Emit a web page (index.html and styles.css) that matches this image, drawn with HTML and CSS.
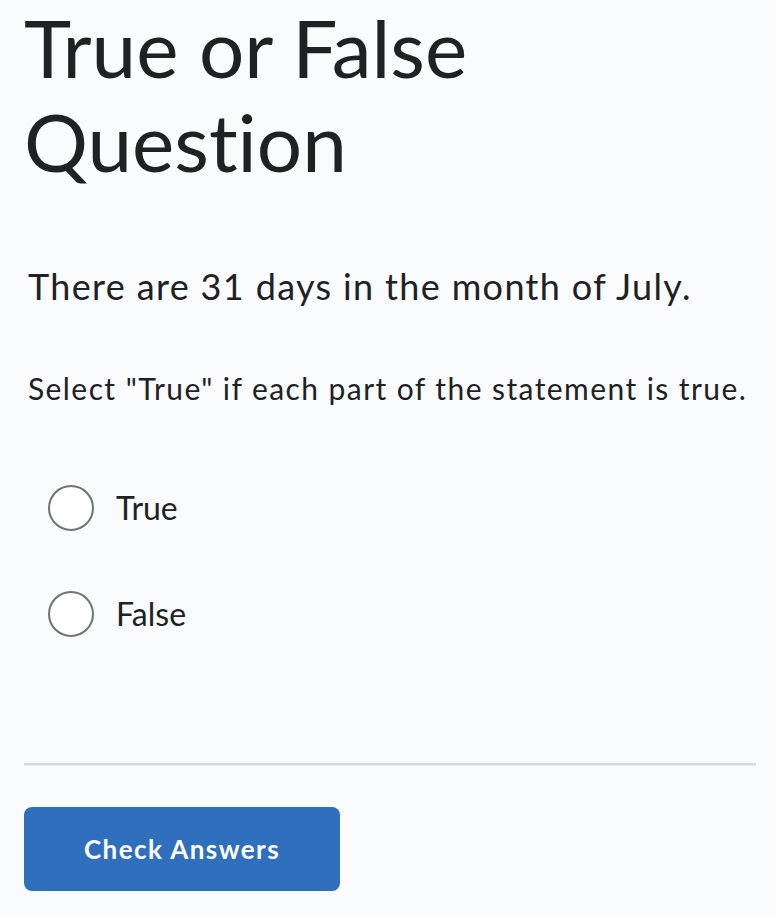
FILE: index.html
```html
<!DOCTYPE html>
<html lang="en">
<head>
<meta charset="utf-8">
<title>True or False Question</title>
<link rel="stylesheet" href="styles.css">
</head>
<body>
<main class="page">
  <h1 class="title">True or False Question</h1>
  <p class="prompt">There are 31 days in the month of July.</p>
  <p class="instruction">Select "True" if each part of the statement is true.</p>
  <div class="options">
    <label class="option"><span class="radio"></span><span class="option-text">True</span></label>
    <label class="option"><span class="radio"></span><span class="option-text">False</span></label>
  </div>
  <hr class="divider">
  <button class="check" type="button">Check Answers</button>
</main>
</body>
</html>
```

FILE: styles.css
```css
html, body {
  margin: 0;
  padding: 0;
  background: #f9fbfe;
}

body {
  font-family: Lato, "Open Sans", sans-serif;
  color: #202122;
  font-variant-ligatures: none;
}

.page {
  padding: 0 20px 0 24px;
  display: flex;
  flex-direction: column;
  align-items: flex-start;
}

.title {
  margin: 0;
  font-size: 80px;
  font-weight: 400;
  line-height: 94px;
}

.prompt {
  margin: 77px 0 0 4px;
  font-size: 36px;
  line-height: 1.2;
  letter-spacing: 1.35px;
}

.instruction {
  margin: 62px 0 0 4px;
  font-size: 30px;
  line-height: 1.2;
  letter-spacing: 1.42px;
}

.options {
  margin-top: 79px;
  display: flex;
  flex-direction: column;
  gap: 60px;
}

.option {
  display: flex;
  align-items: center;
  gap: 22px;
  margin-left: 24px;
}

.radio {
  width: 42px;
  height: 42px;
  border: 2px solid #6f7376;
  border-radius: 50%;
  background: #ffffff;
  flex: none;
}

.option-text {
  font-size: 32px;
  line-height: 1.2;
}

.divider {
  align-self: stretch;
  margin: 126px 0 0 0;
  height: 0;
  border: 0;
  border-top: 2px solid #d4d7db;
  border-bottom: 1px solid #e8eaec;
}

.check {
  margin-top: 41px;
  width: 316px;
  height: 84px;
  border: 0;
  border-radius: 8px;
  background: #306fbb;
  color: #ffffff;
  font-family: Lato, "Open Sans", sans-serif;
  font-weight: 700;
  font-size: 26px;
  letter-spacing: 1.45px;
  padding: 0;
}
```
